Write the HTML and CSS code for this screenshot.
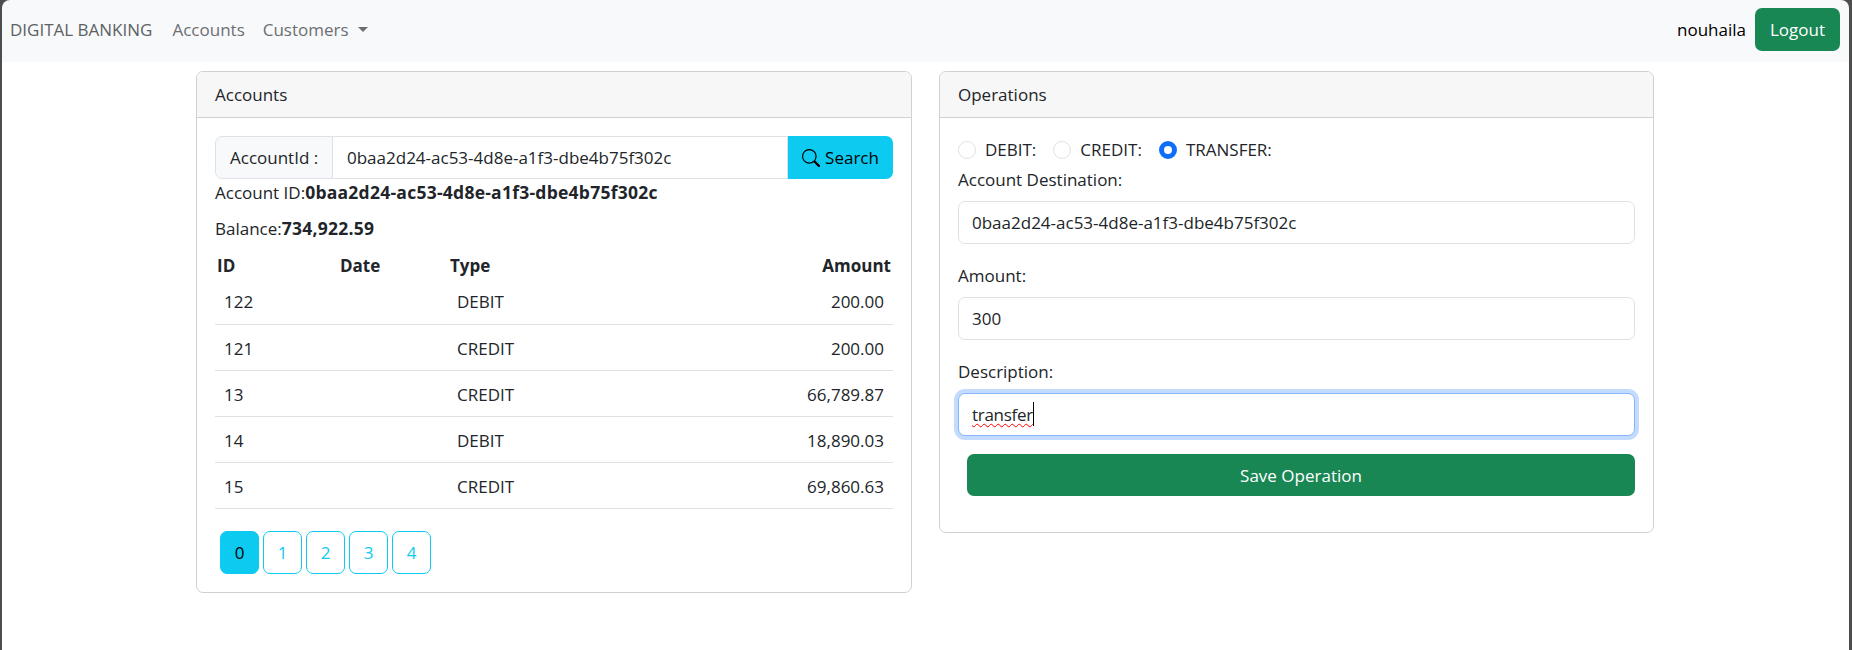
FILE: index.html
```html
<!DOCTYPE html>
<html lang="en">
<head>
    <meta charset="UTF-8">
    <meta name="viewport" content="width=device-width, initial-scale=1.0">
    <title>Digital Banking</title>
    <link rel="stylesheet" href="styles.css">
</head>
<body>
    <nav class="navbar">
        <a class="nav-brand" href="#">DIGITAL BANKING</a>
        <a class="nav-link" href="#">Accounts</a>
        <a class="nav-link nav-dropdown" href="#">Customers</a>
        <span class="nav-user">nouhaila</span>
        <button class="btn btn-green btn-logout" type="button">Logout</button>
    </nav>

    <main class="content">
        <!-- Accounts card -->
        <section class="card card-accounts">
            <div class="card-header">Accounts</div>
            <div class="card-body">
                <div class="input-group">
                    <span class="input-group-text">AccountId :</span>
                    <input class="input-group-field" type="text" value="0baa2d24-ac53-4d8e-a1f3-dbe4b75f302c">
                    <button class="btn-search" type="button">
                        <svg class="search-icon" viewBox="0 0 16 16" width="18" height="18" fill="currentColor">
                            <path d="M11.742 10.344a6.5 6.5 0 1 0-1.397 1.398h-.001c.03.04.062.078.098.115l3.85 3.85a1 1 0 0 0 1.415-1.414l-3.85-3.85a1.007 1.007 0 0 0-.115-.1zM12 6.5a5.5 5.5 0 1 1-11 0 5.5 5.5 0 0 1 11 0z"/>
                        </svg>
                        Search
                    </button>
                </div>
                <p class="account-line">Account ID:<strong>0baa2d24-ac53-4d8e-a1f3-dbe4b75f302c</strong></p>
                <p class="account-line">Balance:<strong>734,922.59</strong></p>

                <table class="ops-table">
                    <thead>
                        <tr>
                            <th class="col-id">ID</th>
                            <th class="col-date">Date</th>
                            <th>Type</th>
                            <th class="text-end">Amount</th>
                        </tr>
                    </thead>
                    <tbody>
                        <tr><td>122</td><td></td><td>DEBIT</td><td class="text-end">200.00</td></tr>
                        <tr><td>121</td><td></td><td>CREDIT</td><td class="text-end">200.00</td></tr>
                        <tr><td>13</td><td></td><td>CREDIT</td><td class="text-end">66,789.87</td></tr>
                        <tr><td>14</td><td></td><td>DEBIT</td><td class="text-end">18,890.03</td></tr>
                        <tr><td>15</td><td></td><td>CREDIT</td><td class="text-end">69,860.63</td></tr>
                    </tbody>
                </table>

                <div class="pager">
                    <button class="page-btn page-active" type="button">0</button>
                    <button class="page-btn" type="button">1</button>
                    <button class="page-btn" type="button">2</button>
                    <button class="page-btn" type="button">3</button>
                    <button class="page-btn" type="button">4</button>
                </div>
            </div>
        </section>

        <!-- Operations card -->
        <section class="card card-operations">
            <div class="card-header">Operations</div>
            <div class="card-body">
                <form class="op-form">
                    <div class="radio-row">
                        <label class="radio-item"><input class="radio" type="radio" name="opType">DEBIT:</label>
                        <label class="radio-item"><input class="radio" type="radio" name="opType">CREDIT:</label>
                        <label class="radio-item"><input class="radio" type="radio" name="opType" checked>TRANSFER:</label>
                    </div>
                    <div class="field field-first">
                        <label class="field-label" for="dest">Account Destination:</label>
                        <input class="form-control" id="dest" type="text" value="0baa2d24-ac53-4d8e-a1f3-dbe4b75f302c">
                    </div>
                    <div class="field">
                        <label class="field-label" for="amount">Amount:</label>
                        <input class="form-control" id="amount" type="text" value="300">
                    </div>
                    <div class="field">
                        <span class="field-label">Description:</span>
                        <div class="form-control form-control-focus"><span class="misspelled">transfer</span><span class="text-caret"></span></div>
                    </div>
                    <button class="btn btn-green btn-save" type="button">Save Operation</button>
                </form>
            </div>
        </section>
    </main>

    <!-- Dark rounded edge of the browser window around the page -->
    <div class="window-edge"></div>
</body>
</html>
```

FILE: styles.css
```css
* {
    box-sizing: border-box;
}

body {
    margin: 0;
    background-color: #fff;
    color: #212529;
    font-family: "Open Sans", "Noto Sans", sans-serif;
    font-size: 17px;
    line-height: 27px;
}

a {
    text-decoration: none;
}

strong {
    font-size: 17.5px;
    letter-spacing: 0.25px;
}

/* Navbar */
.navbar {
    display: flex;
    align-items: center;
    height: 62px;
    padding: 0 12px 3px 10px;
    background-color: #f8f9fa;
}

.nav-brand {
    margin-right: 20px;
    color: #5d6164;
}

.nav-link {
    margin-right: 18px;
    color: #6c6f72;
}

.nav-dropdown {
    display: flex;
    align-items: center;
}

.nav-dropdown::after {
    content: "";
    margin-left: 9px;
    border-top: 5px solid #6c6f72;
    border-left: 5px solid transparent;
    border-right: 5px solid transparent;
}

.nav-user {
    margin-left: auto;
    margin-right: 9px;
    color: #000;
}

.btn {
    height: 43px;
    border: 0;
    border-radius: 7px;
    font: inherit;
}

.btn-green {
    background-color: #198754;
    color: #fff;
}

.btn-logout {
    width: 85px;
}

/* Two cards side by side */
.content {
    display: flex;
    align-items: flex-start;
    gap: 27px;
    padding: 9px 0 0 196px;
}

.card {
    flex: none;
    border: 1px solid #d0d1d2;
    border-radius: 7px;
    overflow: hidden;
}

.card-accounts {
    width: 716px;
}

.card-operations {
    width: 715px;
}

.card-header {
    height: 46px;
    padding: 9px 18px;
    background-color: #f7f7f7;
    border-bottom: 1px solid #d0d1d2;
}

.card-body {
    padding: 18px;
}

/* Account search */
.input-group {
    display: flex;
    height: 43px;
}

.input-group-text {
    width: 118px;
    padding: 7px 0 0 14px;
    background-color: #f8f9fa;
    border: 1px solid #dee2e6;
    border-radius: 7px 0 0 7px;
}

.input-group-field {
    flex: 1;
    min-width: 0;
    padding: 0 14px;
    border: 1px solid #dee2e6;
    border-left: 0;
    font: inherit;
    color: #212529;
}

.btn-search {
    display: flex;
    align-items: center;
    justify-content: center;
    gap: 5px;
    width: 105px;
    padding: 0;
    border: 0;
    border-radius: 0 7px 7px 0;
    background-color: #0dcaf0;
    font: inherit;
    color: #000;
}

.account-line {
    margin: 0 0 9px;
}

/* Operations table */
.ops-table {
    width: 100%;
    margin-top: 9px;
    border-collapse: collapse;
    table-layout: fixed;
}

.ops-table th {
    height: 27px;
    padding: 2px 2px 0;
    line-height: 25px;
    text-align: left;
}

.ops-table .text-end {
    text-align: right;
}

.ops-table td {
    height: 46px;
    padding: 2px 9px 0;
    border-bottom: 1px solid #dee2e6;
}

.col-id {
    width: 123px;
}

.col-date {
    width: 110px;
}

/* Pagination */
.pager {
    display: flex;
    gap: 4px;
    margin: 22px 0 0 5px;
}

.page-btn {
    width: 39px;
    height: 43px;
    padding: 0;
    border: 1px solid #0dcaf0;
    border-radius: 7px;
    background-color: #fff;
    color: #0dcaf0;
    font: inherit;
}

.page-active {
    background-color: #0dcaf0;
    color: #000;
}

/* Operation form */
.op-form {
    padding-bottom: 18px;
}

.radio-row {
    display: flex;
    gap: 17px;
}

.radio-item {
    display: flex;
    align-items: center;
    gap: 9px;
}

.radio {
    appearance: none;
    width: 18px;
    height: 18px;
    margin: 0;
    border: 1px solid #dee2e6;
    border-radius: 50%;
    background-color: #fff;
}

.radio:checked {
    border: 5px solid #0d6efd;
}

.field {
    margin-top: 18px;
}

.field-first {
    margin-top: 3px;
}

.field-label {
    display: block;
    margin-bottom: 8px;
}

.form-control {
    display: block;
    width: 100%;
    height: 43px;
    padding: 7px 13px;
    border: 1px solid #dee2e6;
    border-radius: 7px;
    background-color: #fff;
    color: #212529;
    font: inherit;
}

.form-control-focus {
    display: flex;
    border-color: #86b7fe;
    box-shadow: 0 0 0 4px #c2dbfe;
}

.misspelled {
    letter-spacing: -0.3px;
    text-decoration: underline wavy #f00 1px;
    text-underline-offset: 2px;
}

.text-caret {
    width: 1px;
    height: 24px;
    margin-top: 1px;
    background-color: #000;
}

.btn-save {
    display: block;
    width: calc(100% - 9px);
    height: 42px;
    margin: 18px 0 0 9px;
}

/* Window edge, drawn over the page */
.window-edge {
    position: fixed;
    top: 0;
    right: 0;
    bottom: 0;
    left: 0;
    overflow: hidden;
    pointer-events: none;
}

.window-edge::before {
    content: "";
    position: absolute;
    top: 0;
    right: 3px;
    bottom: -20px;
    left: 2px;
    border-radius: 8px 8px 0 0;
    box-shadow: 0 0 0 6px #4d4d4d;
}
```
